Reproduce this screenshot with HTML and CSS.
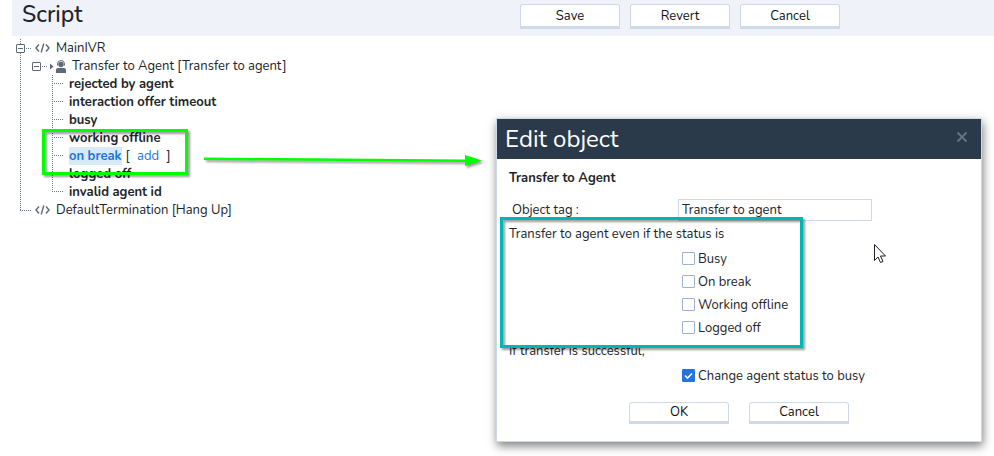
FILE: index.html
```html
<!DOCTYPE html>
<html lang="en">
<head>
    <meta charset="UTF-8">
    <title>Script</title>
    <link rel="stylesheet" href="styles.css">
</head>
<body>
    <header class="topbar">
        <h1>Script</h1>
        <div class="actions">
            <button type="button" class="btn">Save</button>
            <button type="button" class="btn">Revert</button>
            <button type="button" class="btn">Cancel</button>
        </div>
    </header>

    <main>
        <ul class="tree">
            <li>
                <div class="row">
                    <button type="button" class="toggle" aria-label="Collapse MainIVR"></button>
                    <span class="stub"></span>
                    <svg class="code" viewBox="0 0 15 10"><path d="M4 1.5 1 5l3 3.5M11 1.5 14 5l-3 3.5M8.8.5 6.2 9.5"/></svg>
                    <span>MainIVR</span>
                </div>
                <ul class="agent">
                    <li>
                        <div class="row">
                            <button type="button" class="toggle" aria-label="Collapse Transfer to Agent"></button>
                            <span class="stub"></span>
                            <svg class="person" viewBox="0 0 16 13"><path d="M0 3.500v6l3.500-3zM6 13v-3Q6 8 8 8h6q2 0 2 2v3z"/><circle cx="11" cy="4.500" r="2.700"/><path class="headset" d="M7.500 5.500V4a3.500 3.500 0 0 1 7 0v1.500"/></svg>
                            <span>Transfer to Agent [Transfer to agent]</span>
                        </div>
                        <ul class="exits">
                            <li>rejected by agent</li>
                            <li>interaction offer timeout</li>
                            <li>busy</li>
                            <li>working offline</li>
                            <li><span class="selected">on break</span><span class="add">[ <a href="#">add</a> ]</span></li>
                            <li>logged off</li>
                            <li>invalid agent id</li>
                        </ul>
                    </li>
                </ul>
            </li>
            <li>
                <div class="row leaf">
                    <svg class="code" viewBox="0 0 15 10"><path d="M4 1.5 1 5l3 3.5M11 1.5 14 5l-3 3.5M8.8.5 6.2 9.5"/></svg>
                    <span>DefaultTermination [Hang Up]</span>
                </div>
            </li>
        </ul>
    </main>

    <div class="mark mark-green"></div>
    <svg class="arrow" width="290" height="24" viewBox="0 0 290 24"><path d="M4 7.500 265 9.500V5L282 10.500 265 16V12L4 10z"/></svg>

    <form class="dialog" role="dialog" aria-labelledby="dlg-title">
        <div class="dialog-head">
            <h2 id="dlg-title">Edit object</h2>
            <button type="button" class="close" aria-label="Close"><svg viewBox="0 0 12 12"><path d="m1.500 1.500 9 9m0-9-9 9"/></svg></button>
        </div>
        <div class="dialog-body">
            <h3>Transfer to Agent</h3>
            <div class="field">
                <label for="tag">Object tag :</label>
                <input type="text" id="tag" value="Transfer to agent">
            </div>
            <p>Transfer to agent even if the status is</p>
            <div class="checks">
                <label><input type="checkbox">Busy</label>
                <label><input type="checkbox">On break</label>
                <label><input type="checkbox">Working offline</label>
                <label><input type="checkbox">Logged off</label>
            </div>
            <p>If transfer is successful,</p>
            <div class="checks">
                <label><input type="checkbox" checked>Change agent status to busy</label>
            </div>
            <div class="dialog-buttons">
                <button type="button" class="btn">OK</button>
                <button type="button" class="btn">Cancel</button>
            </div>
        </div>
        <div class="mark mark-teal"></div>
        <svg class="cursor" width="14" height="21" viewBox="0 0 14 21"><path d="M1.500 1.500v16l3.500-3.500 2.500 5.500 2.500-1-2.500-5.500h5z"/></svg>
    </form>
</body>
</html>
```

FILE: styles.css
```css
*{
    margin: 0;
    padding: 0;
    box-sizing: border-box;
}

body{
    font-family: Nunito, 'Nunito Sans', Lato, sans-serif;
    font-size: 13px;
    line-height: 18px;
    color: #212529;
    background-color: #ffffff;
}

ul{
    list-style: none;
}

button, input{
    font: inherit;
    color: inherit;
}

.topbar{
    display: flex;
    justify-content: space-between;
    align-items: flex-start;
    height: 36px;
    margin-left: 12px;
    padding: 0 154px 0 10px;
    background-color: #eff2f8;
}

.topbar h1{
    font-size: 23px;
    font-weight: 500;
    line-height: 30px;
}

.actions{
    display: flex;
    gap: 10px;
    padding-top: 4px;
}

.btn{
    width: 100px;
    height: 25px;
    border: 1px solid #cfdae8;
    border-bottom-width: 3px;
    border-radius: 3px 3px 0 0;
    background-color: #ffffff;
    color: #111111;
}

/* tree */
.tree{
    padding: 3px 0 0 16px;
}

/* dotted connector lines */
.tree > li, .exits li{
    background-image: repeating-linear-gradient(to bottom, #6b7883 0 1px, transparent 1px 2px);
    background-repeat: no-repeat;
    background-position: 4px 0;
    background-size: 1px 100%;
}

.tree > li:last-child, .exits li:last-child{
    background-size: 1px 9px;
}

.row{
    display: flex;
    align-items: center;
    height: 18px;
}

.toggle{
    width: 9px;
    height: 9px;
    border: 1px solid #5d6b78;
    border-radius: 1px;
    background: linear-gradient(#5d6b78, #5d6b78) center / 5px 1px no-repeat #ffffff;
}

.stub{
    width: 6px;
    height: 1px;
    margin-right: 3px;
    background-image: repeating-linear-gradient(to right, transparent 0 1px, #6b7883 1px 2px);
}

.code{
    width: 15px;
    height: 10px;
    margin: 0 6px 0 1px;
    fill: none;
    stroke: #5d6b78;
    stroke-width: 1.4;
}

.person{
    width: 16px;
    height: 13px;
    margin-right: 6px;
    fill: #5d6b78;
}

.headset{
    fill: none;
    stroke: #5d6b78;
}

.agent{
    padding-left: 16px;
}

.exits{
    padding-left: 16px;
    font-weight: bold;
}

.exits li{
    padding-left: 21px;
}

.exits li::before, .leaf::before{
    content: '';
    display: inline-block;
    width: 11px;
    height: 1px;
    margin: 0 6px 0 -17px;
    vertical-align: 4px;
    background-image: repeating-linear-gradient(to right, #6b7883 0 1px, transparent 1px 2px);
}

.leaf::before{
    margin: 0 3px 0 4px;
}

.selected{
    background-color: #d8e9f8;
    color: #1976d8;
}

.add{
    margin-left: 4px;
    font-weight: normal;
}

.add a{
    margin: 0 4px;
    color: #1976d8;
    text-decoration: none;
}

/* dialog */
.dialog{
    position: absolute;
    top: 118px;
    left: 496px;
    right: 12px;
    border: 1px solid #cfdae8;
    background-color: #ffffff;
    box-shadow: 1px 4px 9px rgba(0, 0, 0, 0.5);
}

.dialog-head{
    display: flex;
    justify-content: space-between;
    height: 40px;
    padding: 0 13px 0 8px;
    background-color: #2b3a4a;
    color: #ffffff;
}

.dialog-head h2{
    font-size: 24px;
    font-weight: normal;
    line-height: 40px;
}

.close{
    width: 12px;
    height: 12px;
    margin-top: 12px;
    border: none;
    background: none;
}

.close svg{
    display: block;
    fill: none;
    stroke: #657280;
    stroke-width: 2;
}

.dialog-body{
    padding: 9px 12px 17px;
    line-height: 20px;
}

.dialog-body h3{
    font-size: 13px;
    margin-bottom: 11px;
}

.field{
    display: grid;
    grid-template-columns: 166px 194px;
    align-items: center;
    padding-left: 3px;
    margin-bottom: 3px;
}

.field input{
    height: 22px;
    padding: 0 3px;
    border: 1px solid #cfdae8;
}

.checks{
    padding: 3px 0 2px 173px;
}

.checks label{
    display: flex;
    align-items: center;
    gap: 3px;
    height: 23px;
}

.checks input{
    appearance: none;
    width: 13px;
    height: 13px;
    border: 1px solid #9fb3d1;
    border-radius: 1px;
}

.checks input:checked{
    border-color: #2374db;
    background: url("data:image/svg+xml,%3Csvg xmlns='http://www.w3.org/2000/svg' viewBox='0 0 11 11'%3E%3Cpath d='M2 5.500l2.500 2.500L9 3.500' fill='none' stroke='white' stroke-width='1.600'/%3E%3C/svg%3E") #2374db;
}

.dialog-buttons{
    display: flex;
    justify-content: center;
    gap: 20px;
    margin-top: 13px;
}

.dialog-buttons .btn{
    height: 22px;
    line-height: 18px;
}

/* callouts drawn over the page */
.mark{
    position: absolute;
    border: 3px solid;
    filter: drop-shadow(2px 2px 1px rgba(0, 0, 0, 0.4));
}

.mark-green{
    top: 129px;
    left: 42px;
    width: 146px;
    height: 46px;
    border-color: #00ff00;
}

.mark-teal{
    top: 98px;
    left: 3px;
    width: 303px;
    height: 131px;
    border-color: #00b5b5;
}

.arrow{
    position: absolute;
    top: 150px;
    left: 200px;
    fill: #00ff00;
    filter: drop-shadow(2px 2px 1px rgba(0, 0, 0, 0.4));
}

.cursor{
    position: absolute;
    top: 124px;
    left: 376px;
    fill: #ffffff;
    stroke: #1c1c2c;
}
```
